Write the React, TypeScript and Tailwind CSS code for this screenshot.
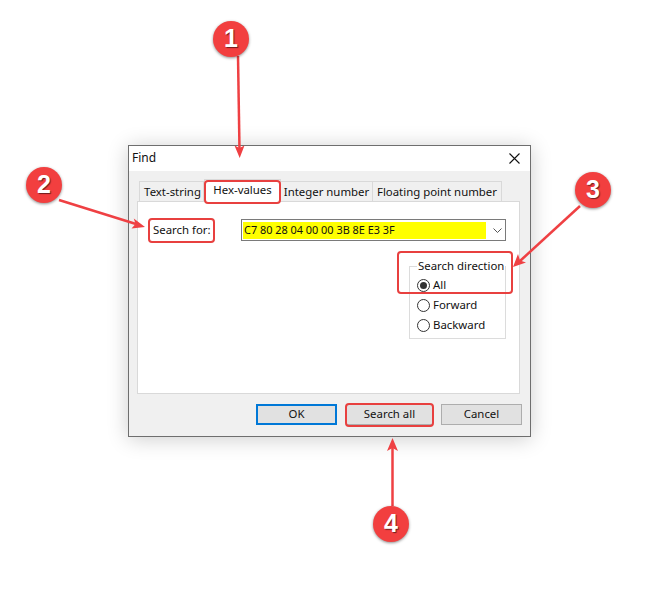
const uiFont = { fontFamily: '"Noto Sans", "Open Sans", sans-serif' };

function Radio({ label, checked }: { label: string; checked?: boolean }) {
  return (
    <div className="flex h-5 items-center gap-[3px] pl-[7px]">
      <span className="flex h-[13px] w-[13px] items-center justify-center rounded-full border border-[#333] bg-white">
        {checked && <span className="h-[7px] w-[7px] rounded-full bg-[#333]" />}
      </span>
      <span className="-mt-[1px]">{label}</span>
    </div>
  );
}

function Badge({ n, className }: { n: number; className: string }) {
  return (
    <div
      className={
        "absolute flex h-9 w-9 items-center justify-center rounded-full bg-[#f23f3f] text-[25px] font-bold text-white shadow-[0_1px_3px_rgba(0,0,0,0.45)] [font-family:'Liberation_Sans',sans-serif] [text-shadow:1px_1px_1px_rgba(0,0,0,0.55)] " +
        className
      }
    >
      {n}
    </div>
  );
}

export default function App() {
  return (
    <div className="relative h-[603px] w-[651px] overflow-hidden bg-white pl-[128px] pt-[145px]">
      {/* Find dialog */}
      <div
        className="flex h-[292px] w-[403px] flex-col border border-[#6e6e6e] bg-[#f0f0f0] text-[11.4px] text-[#111] shadow-[0_2px_20px_rgba(0,0,0,0.2)]"
        style={uiFont}
      >
        <div className="flex h-[25px] shrink-0 items-center justify-between bg-white pl-[3px] pr-[10px]">
          <span className="-mt-[1px] text-[12px]">Find</span>
          <svg width="11" height="11" viewBox="0 0 11 11" stroke="#111" strokeWidth="1.1">
            <path d="M0.5 0.5L10.5 10.5M10.5 0.5L0.5 10.5" />
          </svg>
        </div>

        {/* Tabs */}
        <div className="mt-[10px] flex h-[20px] shrink-0 items-stretch pl-[10px]">
          <div className="flex w-[65px] items-center justify-center border border-b-0 border-[#d9d9d9] bg-[#f0f0f0] pl-[2px]">Text-string</div>
          <div className="relative -mt-[2px] flex h-[23px] w-[77px] items-start justify-center border border-b-0 border-[#d9d9d9] bg-white pt-[1px]">Hex-values</div>
          <div className="flex w-[92px] items-center justify-center border border-b-0 border-l-0 border-[#d9d9d9] bg-[#f0f0f0]">Integer number</div>
          <div className="flex w-[129px] items-center justify-center border border-b-0 border-l-0 border-[#d9d9d9] bg-[#f0f0f0]">Floating point number</div>
        </div>

        {/* Tab panel */}
        <div className="ml-[8px] flex h-[193px] w-[383px] shrink-0 flex-col border border-[#d9d9d9] bg-white">
          <div className="mt-[17px] flex h-[22px] items-center">
            <span className="ml-[15px] w-[88px]">Search for:</span>
            <div className="flex h-[22px] w-[265px] items-center border border-[#7a7a7a] pl-[1px] pr-[2px]">
              <span className="flex h-[17px] w-[243px] items-center bg-[#ffff00] pl-[1px] text-[10.9px]">C7 80 28 04 00 00 3B 8E E3 3F</span>
              <svg className="ml-[7px]" width="9" height="5" viewBox="0 0 9 5" fill="none" stroke="#555" strokeWidth="1">
                <path d="M0.5 0.5L4.500 4.500L8.500 0.5" />
              </svg>
            </div>
          </div>

          {/* Search direction group */}
          <div className="relative ml-[271px] mt-[25px] h-[73px] w-[97px] border border-[#dcdcdc] pt-[8px]">
            <span className="absolute -top-[10px] left-[7px] whitespace-nowrap bg-white px-[1px]">Search direction</span>
            <Radio label="All" checked />
            <Radio label="Forward" />
            <Radio label="Backward" />
          </div>
        </div>

        {/* Buttons */}
        <div className="mt-[10px] flex pl-[127px]">
          <button className="flex h-[21px] w-[81px] items-center justify-center border-2 border-[#0078d7] bg-[#e1e1e1] pb-[1px]">OK</button>
          <button className="ml-[9px] flex h-[21px] w-[87px] items-center justify-center border border-[#adadad] bg-[#e1e1e1] pb-[1px]">Search all</button>
          <button className="ml-[8px] flex h-[21px] w-[81px] items-center justify-center border border-[#adadad] bg-[#e1e1e1] pb-[1px]">Cancel</button>
        </div>
      </div>

      {/* Red highlights */}
      <div className="absolute left-[204px] top-[180px] h-[24px] w-[77px] rounded-[4px] border-2 border-[#e8403f]" />
      <div className="absolute left-[148px] top-[218px] h-[25px] w-[67px] rounded-[4px] border-2 border-[#e8403f]" />
      <div className="absolute left-[397px] top-[251px] h-[43px] w-[116px] rounded-[4px] border-2 border-[#e8403f]" />
      <div className="absolute left-[345px] top-[403px] h-[24px] w-[89px] rounded-[4px] border-2 border-[#e8403f]" />

      {/* Arrows */}
      <svg className="absolute left-0 top-0" width="651" height="603" fill="none" stroke="#ef4043" strokeWidth="2.5">
        <path d="M238 56L239.500 150" />
        <path fill="#ef4043" stroke="none" d="M239.700 158L234.500 145.500L239.500 148L244.500 145.500Z" />
        <path d="M59 200L136 224" />
        <path fill="#ef4043" stroke="none" d="M145 227L131.500 228.500L135.500 224L133.800 218.500Z" />
        <path d="M580 206L520 261" />
        <path fill="#ef4043" stroke="none" d="M513 267L518 254L520 260.500L526 262.500Z" />
        <path d="M392.500 506L392.500 448" />
        <path fill="#ef4043" stroke="none" d="M392.500 438L398 451L392.500 448L387 451Z" />
      </svg>

      <Badge n={1} className="left-[213px] top-[21px]" />
      <Badge n={2} className="left-[26px] top-[167px]" />
      <Badge n={3} className="left-[575px] top-[172px]" />
      <Badge n={4} className="left-[373px] top-[506px]" />
    </div>
  );
}
